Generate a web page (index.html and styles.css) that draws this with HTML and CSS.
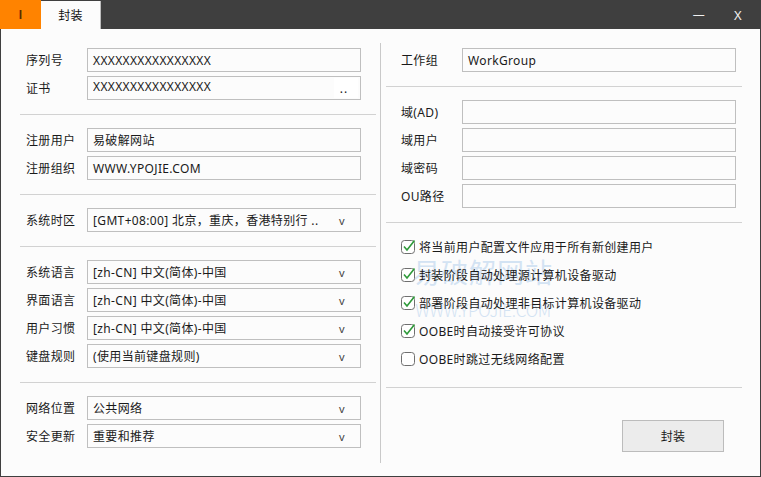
FILE: index.html
```html
<!DOCTYPE html>
<html lang="zh-CN">
<head>
<meta charset="utf-8">
<link rel="stylesheet" href="styles.css">
</head>
<body>
<div class="window">
  <div class="titlebar">
    <div class="tab tab-orange">I</div>
    <div class="tab tab-active">封装</div>
    <div class="spacer"></div>
    <div class="winbtn">—</div>
    <div class="winbtn close">X</div>
  </div>
  <div class="content">
    <div class="watermark"><div class="wm-cn">易破解网站</div><div class="wm-en">WWW.YPOJIE.COM</div></div>
    <div class="panel left">
      <div class="group first">
        <div class="row"><span class="label">序列号</span><div class="field">XXXXXXXXXXXXXXXX</div></div>
        <div class="row"><span class="label">证书</span><div class="field file"><span class="val">XXXXXXXXXXXXXXXX</span><span class="dots">..</span></div></div>
      </div>
      <div class="sep"></div>
      <div class="group">
        <div class="row"><span class="label">注册用户</span><div class="field">易破解网站</div></div>
        <div class="row"><span class="label">注册组织</span><div class="field">WWW.YPOJIE.COM</div></div>
      </div>
      <div class="sep"></div>
      <div class="group">
        <div class="row"><span class="label">系统时区</span><div class="field select"><span class="val">[GMT+08:00] 北京，重庆，香港特别行 ..</span><span class="arrow">v</span></div></div>
      </div>
      <div class="sep"></div>
      <div class="group">
        <div class="row"><span class="label">系统语言</span><div class="field select"><span class="val">[zh-CN] 中文(简体)-中国</span><span class="arrow">v</span></div></div>
        <div class="row"><span class="label">界面语言</span><div class="field select"><span class="val">[zh-CN] 中文(简体)-中国</span><span class="arrow">v</span></div></div>
        <div class="row"><span class="label">用户习惯</span><div class="field select"><span class="val">[zh-CN] 中文(简体)-中国</span><span class="arrow">v</span></div></div>
        <div class="row"><span class="label">键盘规则</span><div class="field select"><span class="val">(使用当前键盘规则)</span><span class="arrow">v</span></div></div>
      </div>
      <div class="sep"></div>
      <div class="group">
        <div class="row"><span class="label">网络位置</span><div class="field select"><span class="val">公共网络</span><span class="arrow">v</span></div></div>
        <div class="row"><span class="label">安全更新</span><div class="field select"><span class="val">重要和推荐</span><span class="arrow">v</span></div></div>
      </div>
    </div>
    <div class="divider"></div>
    <div class="panel right">
      <div class="group first">
        <div class="row"><span class="label">工作组</span><div class="field">WorkGroup</div></div>
      </div>
      <div class="sep"></div>
      <div class="group">
        <div class="row"><span class="label">域(AD)</span><div class="field"></div></div>
        <div class="row"><span class="label">域用户</span><div class="field"></div></div>
        <div class="row"><span class="label">域密码</span><div class="field"></div></div>
        <div class="row"><span class="label">OU路径</span><div class="field"></div></div>
      </div>
      <div class="sep"></div>
      <div class="checks">
        <div class="check"><svg class="cb" viewBox="0 0 16 16" width="16" height="16"><rect x="1.5" y="2.5" width="13" height="13" rx="3" fill="#fff" stroke="#6f6f6f"/><path d="M4 8.5 L7 12 L14.5 2.5" fill="none" stroke="#2f9a3a" stroke-width="1.6"/></svg><span>将当前用户配置文件应用于所有新创建用户</span></div>
        <div class="check"><svg class="cb" viewBox="0 0 16 16" width="16" height="16"><rect x="1.5" y="2.5" width="13" height="13" rx="3" fill="#fff" stroke="#6f6f6f"/><path d="M4 8.5 L7 12 L14.5 2.5" fill="none" stroke="#2f9a3a" stroke-width="1.6"/></svg><span>封装阶段自动处理源计算机设备驱动</span></div>
        <div class="check"><svg class="cb" viewBox="0 0 16 16" width="16" height="16"><rect x="1.5" y="2.5" width="13" height="13" rx="3" fill="#fff" stroke="#6f6f6f"/><path d="M4 8.5 L7 12 L14.5 2.5" fill="none" stroke="#2f9a3a" stroke-width="1.6"/></svg><span>部署阶段自动处理非目标计算机设备驱动</span></div>
        <div class="check"><svg class="cb" viewBox="0 0 16 16" width="16" height="16"><rect x="1.5" y="2.5" width="13" height="13" rx="3" fill="#fff" stroke="#6f6f6f"/><path d="M4 8.5 L7 12 L14.5 2.5" fill="none" stroke="#2f9a3a" stroke-width="1.6"/></svg><span>OOBE时自动接受许可协议</span></div>
        <div class="check"><svg class="cb" viewBox="0 0 16 16" width="16" height="16"><rect x="1.5" y="2.5" width="13" height="13" rx="3" fill="#fff" stroke="#6f6f6f"/></svg><span>OOBE时跳过无线网络配置</span></div>
      </div>
      <div class="sep"></div>
      <div class="actions"><div class="button">封装</div></div>
    </div>
  </div>
</div>
</body>
</html>
```

FILE: styles.css
```css
* { box-sizing: border-box; }
html, body { margin: 0; padding: 0; }
body {
  width: 761px;
  height: 477px;
  overflow: hidden;
  background: #fcfcfc;
  font-family: "Noto Sans", "Noto Sans CJK SC", sans-serif;
  font-size: 12px;
  letter-spacing: 0.35px;
  color: #1a1a1a;
}
.window {
  width: 761px;
  height: 477px;
  display: flex;
  flex-direction: column;
}
.titlebar {
  height: 29px;
  background: #3f3f3f;
  display: flex;
  align-items: stretch;
  flex: none;
}
.tab {
  display: flex;
  align-items: center;
  justify-content: center;
}
.tab-orange {
  width: 41px;
  background: #ff8300;
  color: #5a2c00;
  font-family: "Liberation Sans", sans-serif;
  font-weight: bold;
}
.tab-active {
  width: 60px;
  margin-top: 1px;
  background: #fcfcfc;
  border-right: 1px solid #bdbdbd;
  color: #111;
}
.spacer { flex: 1; }
.winbtn {
  width: 40px;
  display: flex;
  align-items: center;
  justify-content: center;
  color: #f0f0f0;
  font-size: 12px;
}
.winbtn.close { width: 42px; padding-right: 4px; font-size: 13px; }
.content {
  flex: 1;
  display: flex;
  border: 1px solid #3f3f3f;
  border-top: none;
  background: #fcfcfc;
  position: relative;
}
.panel {
  display: flex;
  flex-direction: column;
  position: relative;
}
.left { width: 379px; padding-left: 25px; }
.right { flex: 1; padding-left: 20px; }
.divider {
  width: 1px;
  background: #c9c9c9;
  margin: 14px 0 13px;
}
.group { display: flex; flex-direction: column; gap: 4px; }
.group.first { margin-top: 19px; }
.row { display: flex; align-items: center; height: 24px; }
.label { width: 61px; flex: none; white-space: nowrap; }
.field {
  width: 274px;
  height: 24px;
  border: 1px solid #bfbfbf;
  background: #fcfcfc;
  padding: 0 5px;
  display: flex;
  align-items: center;
  white-space: nowrap;
  overflow: hidden;
}
.field .val { flex: 1; overflow: hidden; }
.file .val { margin-top: -4px; }
.dots {
  width: 24px;
  height: 20px;
  margin-right: -3px;
  background: #ffffff;
  display: flex;
  align-items: center;
  justify-content: center;
  font-size: 12px;
  letter-spacing: 1px;
  padding-top: 1px;
  padding-right: 4px;
}
.arrow {
  width: 20px;
  text-align: center;
  color: #444;
  font-size: 11px;
  margin-right: 3px;
}
.sep {
  height: 1px;
  background: #d2d2d2;
  width: 356px;
  margin: 14px 0 13px -6px;
}
.right .sep { margin-left: -15px; }
.checks { display: flex; flex-direction: column; margin-top: -3px; position: relative; z-index: 1; }
.check { height: 28px; display: flex; align-items: center; gap: 3px; }
.cb { flex: none; margin-left: -1px; margin-top: -2px; }
.actions { display: flex; margin-top: 19px; }
.button {
  margin-left: 221px;
  width: 102px;
  height: 32px;
  background: #ececec;
  border: 1px solid #bcbcbc;
  display: flex;
  align-items: center;
  justify-content: center;
  font-size: 12px;
}
.watermark {
  position: absolute;
  left: 410px;
  top: 226px;
  width: 144px;
  pointer-events: none;
  text-align: center;
  color: #d3e3f3;
  font-family: "Noto Sans CJK SC", sans-serif;
  z-index: 0;
}
.wm-cn { font-size: 27px; line-height: 34px; letter-spacing: 1px; }
.wm-en { font-size: 17px; line-height: 18px; letter-spacing: -0.3px; margin-top: 12px; font-weight: 300; }
```
